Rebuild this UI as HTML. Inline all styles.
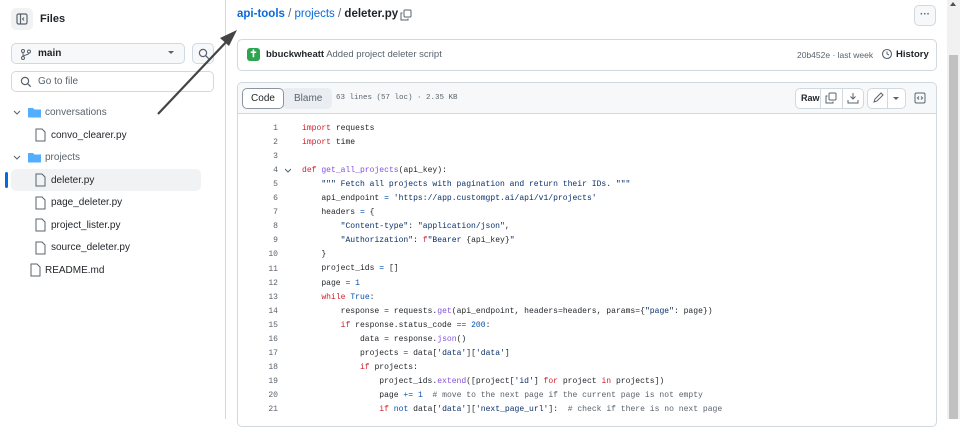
<!DOCTYPE html><html><head><style>
*{box-sizing:border-box;margin:0;padding:0}
body{width:960px;height:419px;overflow:hidden;background:#fff;font-family:"Liberation Sans",sans-serif;color:#1f2328;position:relative}
.a{position:absolute}
.btn{position:absolute;border:1px solid #d1d9e0;border-radius:5px;background:#f6f8fa}
.row{position:absolute;font-size:10px;color:#1f2328;height:22px;line-height:22px}
.code{position:absolute;left:240px;top:122px;font-family:"Liberation Mono",monospace;font-size:8.05px;line-height:14.05px;white-space:pre}
.ln{position:absolute;width:38px;text-align:right;color:#59636e}
.k{color:#cf222e}.f{color:#8250df}.s{color:#0a3069}.c{color:#59636e}.n{color:#0550ae}
</style></head><body>
<div class="a" style="left:225px;top:0;width:1px;height:419px;background:#d1d9e0"></div>
<div class="btn" style="left:11px;top:8px;width:22px;height:22px;border:none;background:#f0f2f4"><svg width="22" height="22"><rect x="6" y="6" width="10" height="10" rx="1.5" fill="none" stroke="#59636e" stroke-width="1.2"/><line x1="9.5" y1="6" x2="9.5" y2="16" stroke="#59636e" stroke-width="1.2"/><path d="M13 9.5l-1.5 1.5 1.5 1.5" fill="none" stroke="#59636e"/></svg></div>
<div class="a" style="left:40px;top:13px;font-size:11px;font-weight:bold;color:#1f2328">Files</div>
<div class="btn" style="left:11px;top:43px;width:174px;height:21px"><svg class="a" style="left:8px;top:4px" width="12" height="12"><circle cx="3" cy="3" r="1.5" fill="none" stroke="#59636e"/><circle cx="3" cy="10" r="1.5" fill="none" stroke="#59636e"/><circle cx="9" cy="3.5" r="1.5" fill="none" stroke="#59636e"/><path d="M3 4.5v4M9 5c0 2-6 2-6 3.5" fill="none" stroke="#59636e"/></svg><span class="a" style="left:26px;top:4px;font-size:10px;font-weight:bold">main</span><span class="a" style="left:156px;top:7px;border:3px solid transparent;border-top:3px solid #59636e"></span></div>
<div class="btn" style="left:192px;top:43px;width:22px;height:21px"><svg class="a" style="left:5px;top:4px" width="12" height="12"><circle cx="5" cy="5" r="3.6" fill="none" stroke="#59636e" stroke-width="1.2"/><path d="M7.7 7.7l3 3" stroke="#59636e" stroke-width="1.3"/></svg></div>
<div class="a" style="left:11px;top:71px;width:203px;height:21px;border:1px solid #d1d9e0;border-radius:5px"><svg class="a" style="left:8px;top:4px" width="12" height="12"><circle cx="5" cy="5" r="3.6" fill="none" stroke="#59636e" stroke-width="1.2"/><path d="M7.7 7.7l3 3" stroke="#59636e" stroke-width="1.3"/></svg><span class="a" style="left:26px;top:4px;font-size:10px;color:#59636e">Go to file</span></div>
<div class="a" style="left:11px;top:169px;width:190px;height:22px;background:#f0f2f4;border-radius:5px"></div>
<div class="a" style="left:5px;top:172px;width:3px;height:16px;background:#0969da;border-radius:2px"></div>
<svg class="a" style="left:0;top:102px" width="130" height="190">
<g fill="none" stroke="#59636e" stroke-width="1"><path d="M14 9l3 3 3-3M14 54l3 3 3-3"/>
<path d="M36 27h6l3 3v9h-9zM36 72h6l3 3v9h-9zM36 95h6l3 3v9h-9zM36 117h6l3 3v9h-9zM36 140h6l3 3v9h-9zM31 162h6l3 3v9h-9z"/></g>
<path d="M28 6h5l1.5 1.5h6.5v8h-13z" fill="#54aeff"/><path d="M28 51h5l1.5 1.5h6.5v8h-13z" fill="#54aeff"/></svg>
<div class="row" style="left:45px;top:102px;color:#59636e">conversations</div>
<div class="row" style="left:51px;top:125px">convo_clearer.py</div>
<div class="row" style="left:45px;top:147px;color:#59636e">projects</div>
<div class="row" style="left:51px;top:170px">deleter.py</div>
<div class="row" style="left:51px;top:192px">page_deleter.py</div>
<div class="row" style="left:51px;top:215px">project_lister.py</div>
<div class="row" style="left:51px;top:237px">source_deleter.py</div>
<div class="row" style="left:45px;top:260px">README.md</div>
<div class="a" style="left:237px;top:8px;font-size:11.5px"><span style="color:#0969da;font-weight:bold">api-tools</span> <span style="color:#59636e">/</span> <span style="color:#0969da">projects</span> <span style="color:#59636e">/</span> <span style="font-weight:bold">deleter.py</span></div>
<svg class="a" style="left:400px;top:9px" width="12" height="12"><rect x="4" y="1" width="7" height="7" rx="1" fill="none" stroke="#59636e"/><path d="M2.5 4H1v7h7V9.5" fill="none" stroke="#59636e"/></svg>
<div class="btn" style="left:914px;top:5px;width:22px;height:21px;text-align:center;font-size:10px;line-height:17px;color:#59636e;font-weight:bold">···</div>
<div class="a" style="left:237px;top:39px;width:700px;height:32px;border:1px solid #d1d9e0;border-radius:5px"></div>
<div class="a" style="left:247px;top:48px;width:13px;height:13px;border-radius:3px;background:#2da44e;color:#fff;font-size:10px;font-weight:bold;text-align:center;line-height:13px">✝</div>
<div class="a" style="left:266px;top:49px;font-size:9.5px"><b>bbuckwheatt</b> <span style="color:#59636e">Added project deleter script</span></div>
<div class="a" style="left:797px;top:50px;font-size:8.5px;color:#59636e">20b452e · last week</div>
<svg class="a" style="left:881px;top:48px" width="12" height="12"><circle cx="6" cy="6" r="4.5" fill="none" stroke="#59636e" stroke-width="1.1"/><path d="M6 3.5V6l2 1" fill="none" stroke="#59636e"/></svg>
<div class="a" style="left:896px;top:49px;font-size:9.5px;font-weight:bold">History</div>
<div class="a" style="left:237px;top:82px;width:700px;height:345px;border:1px solid #d1d9e0;border-radius:5px"></div>
<div class="a" style="left:238px;top:83px;width:698px;height:31px;background:#f6f8fa;border-bottom:1px solid #d1d9e0;border-radius:5px 5px 0 0"></div>
<div class="a" style="left:282px;top:88px;width:50px;height:21px;background:#eaeef2;border-radius:5px"></div>
<div class="a" style="left:242px;top:88px;width:42px;height:21px;background:#fff;border:1px solid #8c959f;border-radius:5px;font-size:10px;text-align:center;line-height:19px">Code</div>
<div class="a" style="left:294px;top:93px;font-size:10px;color:#59636e">Blame</div>
<div class="a" style="left:336px;top:94px;font-family:'Liberation Mono',monospace;font-size:7.5px;color:#59636e">63 lines (57 loc) · 2.35 KB</div>
<div class="btn" style="left:795px;top:88px;width:69px;height:21px;background:#fff"></div>
<div class="a" style="left:820px;top:89px;width:1px;height:19px;background:#d1d9e0"></div>
<div class="a" style="left:842px;top:89px;width:1px;height:19px;background:#d1d9e0"></div>
<div class="a" style="left:801px;top:93px;font-size:9px;font-weight:bold">Raw</div>
<svg class="a" style="left:825px;top:92px" width="12" height="12"><rect x="4" y="1" width="7" height="7" rx="1" fill="none" stroke="#59636e"/><path d="M2.5 4H1v7h7V9.5" fill="none" stroke="#59636e"/></svg>
<svg class="a" style="left:847px;top:92px" width="12" height="12"><path d="M6 1v6M3.5 4.5L6 7l2.5-2.5M1 8v3h10V8" fill="none" stroke="#59636e"/></svg>
<div class="btn" style="left:867px;top:88px;width:39px;height:21px;background:#fff"></div>
<div class="a" style="left:887px;top:89px;width:1px;height:19px;background:#d1d9e0"></div>
<svg class="a" style="left:872px;top:92px" width="12" height="12"><path d="M2 10l1-3 6-6 2 2-6 6z" fill="none" stroke="#59636e"/></svg>
<span class="a" style="left:893px;top:97px;border:3px solid transparent;border-top:3px solid #59636e"></span>
<svg class="a" style="left:914px;top:92px" width="12" height="12"><rect x="1" y="1" width="10" height="10" rx="1.5" fill="none" stroke="#59636e"/><path d="M5 4.5L3.5 6 5 7.5M7 4.5L8.5 6 7 7.5" fill="none" stroke="#59636e"/></svg>
<svg class="a" style="left:284px;top:167px" width="8" height="8"><path d="M1 2l3 3 3-3" fill="none" stroke="#59636e"/></svg>
<div class="code"><div class="ln">1</div><div class="ln" style="top:14.05px">2</div><div class="ln" style="top:28.1px">3</div><div class="ln" style="top:42.15px">4</div><div class="ln" style="top:56.2px">5</div><div class="ln" style="top:70.25px">6</div><div class="ln" style="top:84.3px">7</div><div class="ln" style="top:98.35px">8</div><div class="ln" style="top:112.4px">9</div><div class="ln" style="top:126.45px">10</div><div class="ln" style="top:140.5px">11</div><div class="ln" style="top:154.55px">12</div><div class="ln" style="top:168.6px">13</div><div class="ln" style="top:182.65px">14</div><div class="ln" style="top:196.7px">15</div><div class="ln" style="top:210.75px">16</div><div class="ln" style="top:224.8px">17</div><div class="ln" style="top:238.85px">18</div><div class="ln" style="top:252.9px">19</div><div class="ln" style="top:266.95px">20</div><div class="ln" style="top:281px">21</div>
<div class="a" style="left:62px;top:0"><span class="k">import</span> requests
<span class="k">import</span> time

<span class="k">def</span> <span class="f">get_all_projects</span>(api_key):
    <span class="s">""" Fetch all projects with pagination and return their IDs. """</span>
    api_endpoint <span class="n">=</span> <span class="s">'https://app.customgpt.ai/api/v1/projects'</span>
    headers <span class="n">=</span> {
        <span class="s">"Content-type"</span>: <span class="s">"application/json"</span>,
        <span class="s">"Authorization"</span>: <span class="k">f</span><span class="s">"Bearer </span>{api_key}<span class="s">"</span>
    }
    project_ids <span class="n">=</span> []
    page <span class="n">=</span> <span class="n">1</span>
    <span class="k">while</span> <span class="n">True</span>:
        response <span class="n">=</span> requests.<span class="f">get</span>(api_endpoint, headers<span class="n">=</span>headers, params<span class="n">=</span>{<span class="s">"page"</span>: page})
        <span class="k">if</span> response.status_code <span class="n">==</span> <span class="n">200</span>:
            data <span class="n">=</span> response.<span class="f">json</span>()
            projects <span class="n">=</span> data[<span class="s">'data'</span>][<span class="s">'data'</span>]
            <span class="k">if</span> projects:
                project_ids.<span class="f">extend</span>([project[<span class="s">'id'</span>] <span class="k">for</span> project <span class="k">in</span> projects])
                page <span class="n">+=</span> <span class="n">1</span>  <span class="c"># move to the next page if the current page is not empty</span>
                <span class="k">if</span> <span class="n">not</span> data[<span class="s">'data'</span>][<span class="s">'next_page_url'</span>]:  <span class="c"># check if there is no next page</span></div></div>
<div class="a" style="left:947px;top:0;width:13px;height:419px;background:#f1f1f1"></div>
<div class="a" style="left:949px;top:55px;width:9px;height:364px;background:#c1c1c1"></div>
<span class="a" style="left:950px;top:2px;border:3.5px solid transparent;border-bottom:4px solid #505050;border-top:0"></span>
<svg class="a" style="left:0;top:0" width="260" height="130"><line x1="158" y1="114" x2="228" y2="40" stroke="#444" stroke-width="2.2"/><path d="M237 30l-17 8 9 8z" fill="#444"/></svg>
</body></html>
